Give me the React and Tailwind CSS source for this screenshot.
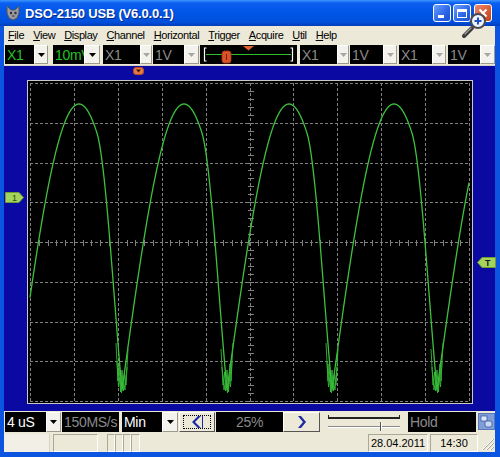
import React from "react";

const P = 105;
const A = 286;
function above(x) {
  const t = (((x - 17) % P) + P) % P;
  if (t < 62) return A * Math.sin((Math.PI / 2) * (t / 62));
  const u = t - 62;
  const c = A * Math.cos((Math.PI / 2) * (u / 62));
  if (u <= 18) return c;
  const s = (u - 18) / 25;
  return Math.max(0, c * (1 - s * s));
}

function tracePoints() {
  const pts = [];
  for (let x = 30; x <= 469.01; x += 0.25) {
    const y = 309 - above(x);
    pts.push(`${(x - 28).toFixed(2)},${y.toFixed(2)}`);
  }
  return pts.join(" ");
}

const TRACE = tracePoints();
const TROUGHS = [122, 227, 332, 437].map((c) => c - 28);

function troughNoise(cx, k) {
  const a = [
    [-6, 262], [-4, 300], [-3, 283], [-1.5, 311], [0, 289], [1.5, 310], [2.5, 291], [4, 304], [6, 268],
  ];
  const b = [
    [-5, 280], [-3.5, 306], [-2, 296], [-0.5, 312], [1, 298], [3, 309], [5, 286],
  ];
  const s = k % 2 === 0 ? 1 : -1;
  return [a, b].map((arr) => arr.map(([dx, y]) => `${cx + dx * s},${y}`).join(" "));
}

const VX = Array.from({ length: 11 }, (_, i) => Math.round(2 + i * 43.9) + 0.5);
const HY = Array.from({ length: 9 }, (_, j) => Math.round(2 + j * 39.75) + 0.5);
const TX = Array.from({ length: 51 }, (_, k) => Math.round(2 + k * 8.78) + 0.5);
const TY = Array.from({ length: 41 }, (_, k) => Math.round(2 + k * 7.95) + 0.5);

function Screen() {
  const g = "#808080";
  return (
    <svg width="444" height="322" className="block">
      <g stroke={g} strokeWidth="1" strokeDasharray="3 2" shapeRendering="crispEdges">
        {VX.map((x, i) => (
          <line key={"v" + i} x1={x} y1={2} x2={x} y2={320} />
        ))}
        {HY.map((y, i) => (
          <line key={"h" + i} x1={2} y1={y} x2={441} y2={y} />
        ))}
      </g>
      <g stroke={g} strokeWidth="1" shapeRendering="crispEdges">
        {TX.map((x, i) => (
          <line key={"tx" + i} x1={x} y1={158.5} x2={x} y2={164.5} />
        ))}
        {TY.map((y, i) => (
          <line key={"ty" + i} x1={219.5} y1={y} x2={225.5} y2={y} />
        ))}
      </g>
      <polyline points={TRACE} fill="none" stroke="#3ec23e" strokeWidth="1.3" strokeLinejoin="round" />
      {TROUGHS.map((cx, k) =>
        troughNoise(cx, k).map((p, j) => (
          <polyline key={k + "-" + j} points={p} fill="none" stroke="#36b836" strokeWidth="1" opacity="0.9" />
        ))
      )}
    </svg>
  );
}

function Arrow({ disabled }) {
  return (
    <svg width="7" height="4" viewBox="0 0 7 4">
      <polygon points="0,0 7,0 3.5,4" fill={disabled ? "#a7a6a0" : "#000"} />
    </svg>
  );
}

function DropBtn({ w, disabled }) {
  return (
    <div
      className={`${w} h-full bg-[#f3f2ec] border border-t-[#ffffff] border-l-[#ffffff] border-r-[#9d9a8c] border-b-[#9d9a8c] flex items-center justify-center`}
    >
      <Arrow disabled={disabled} />
    </div>
  );
}

function Combo({ ml, box, btn, text, color, disabled, h }) {
  return (
    <div className={`flex ${h} ${ml}`}>
      <div
        className={`${box} h-full bg-black flex items-center pl-[2px] overflow-hidden whitespace-nowrap text-[14px] tracking-[-0.3px] leading-none ${color}`}
      >
        {text}
      </div>
      {btn && <DropBtn w={btn} disabled={disabled} />}
    </div>
  );
}

function TitleBar() {
  return (
    <div className="h-[26px] flex items-center pl-[5px] bg-[linear-gradient(180deg,#3d95ff_0%,#0a5ef0_12%,#0055e5_50%,#0050dc_85%,#003cb8_100%)]">
      <svg width="16" height="16" viewBox="0 0 16 16">
        <polygon points="2,1 6,5 10,5 14,1 14,8 12,13 8,15 4,13 2,8" fill="#9a9aa0" stroke="#55555c" strokeWidth="1" />
        <circle cx="6" cy="8" r="1.2" fill="#2b2b2f" />
        <circle cx="10.5" cy="8" r="1.2" fill="#2b2b2f" />
        <path d="M7 11 L9.5 11" stroke="#2b2b2f" strokeWidth="1" />
      </svg>
      <span className="ml-[4px] text-white font-bold text-[13px] tracking-[-0.2px] leading-none [text-shadow:1px_1px_0_#0a2a8a]">
        DSO-2150 USB (V6.0.0.1)
      </span>
      <div className="ml-auto mr-[8px] flex gap-[2px]">
        <div className="w-[18px] h-[18px] rounded-[3px] border border-white bg-[linear-gradient(135deg,#6ea0fa,#2a64e6_60%,#1c50d0)] relative">
          <div className="absolute left-[4px] bottom-[3px] w-[6px] h-[3px] bg-white" />
        </div>
        <div className="w-[18px] h-[18px] rounded-[3px] border border-white bg-[linear-gradient(135deg,#6ea0fa,#2a64e6_60%,#1c50d0)] flex items-center justify-center">
          <div className="w-[10px] h-[9px] border border-white border-t-[3px]" />
        </div>
        <div className="ml-[1px] w-[18px] h-[18px] rounded-[3px] border border-white bg-[linear-gradient(135deg,#eb8a70,#d75a33_60%,#c0401c)] flex items-center justify-center">
          <svg width="10" height="10" viewBox="0 0 10 10">
            <path d="M1.5 1.5 L8.5 8.5 M8.5 1.5 L1.5 8.5" stroke="#fff" strokeWidth="2" />
          </svg>
        </div>
      </div>
    </div>
  );
}

function M({ u, rest }) {
  return (
    <span>
      <span className="underline underline-offset-[1px]">{u}</span>
      {rest}
    </span>
  );
}

function MenuBar() {
  return (
    <div className="h-[18px] bg-[#ece9d8] flex items-center pl-[4px] gap-[9px] text-[11px] tracking-[-0.4px] text-black leading-none">
      <M u="F" rest="ile" />
      <M u="V" rest="iew" />
      <M u="D" rest="isplay" />
      <M u="C" rest="hannel" />
      <M u="H" rest="orizontal" />
      <M u="T" rest="rigger" />
      <M u="A" rest="cquire" />
      <M u="U" rest="til" />
      <M u="H" rest="elp" />
    </div>
  );
}

function TriggerPos() {
  return (
    <div className="ml-[1px] w-[97px] h-[19px] bg-black">
      <svg width="97" height="19" className="block">
        <path d="M6.5 3 L4.5 3 L4.5 16 L6.5 16" stroke="#fff" strokeWidth="1.2" fill="none" />
        <path d="M90.5 3 L92.5 3 L92.5 16 L90.5 16" stroke="#fff" strokeWidth="1.2" fill="none" />
        <line x1="6" y1="9.5" x2="91" y2="9.5" stroke="#2fc02f" strokeWidth="1" />
        <rect x="22" y="6" width="9" height="12" rx="2.5" fill="#d9542a" stroke="#a83510" strokeWidth="0.8" />
        <line x1="26.5" y1="9" x2="26.5" y2="15" stroke="#7a2000" strokeWidth="1" />
        <polygon points="43,1 54,1 48.5,5.5" fill="#e0642f" />
      </svg>
    </div>
  );
}

function TopToolbar() {
  const G = "text-[#22c322]";
  const D = "text-[#8a8a8a]";
  return (
    <div className="h-[22px] bg-[#ece9d8] flex items-start pt-[1px] border-b border-[#d6d3c6]">
      <Combo h="h-[19px]" ml="ml-[1px]" box="w-[29px]" btn="w-[14px]" text="X1" color={G} />
      <Combo h="h-[19px]" ml="ml-[5px]" box="w-[31px]" btn="w-[16px]" text="10mV" color={G} />
      <Combo h="h-[19px]" ml="ml-[3px]" box="w-[37px]" btn="w-[12px]" text="X1" color={D} disabled />
      <Combo h="h-[19px]" ml="ml-[1px]" box="w-[31px]" btn="w-[15px]" text="1V" color={D} disabled />
      <TriggerPos />
      <Combo h="h-[19px]" ml="ml-[3px]" box="w-[37px]" btn="w-[12px]" text="X1" color={D} disabled />
      <Combo h="h-[19px]" ml="ml-[1px]" box="w-[33px]" btn="w-[14px]" text="1V" color={D} disabled />
      <Combo h="h-[19px]" ml="ml-[2px]" box="w-[33px]" btn="w-[14px]" text="X1" color={D} disabled />
      <Combo h="h-[19px]" ml="ml-[2px]" box="w-[32px]" btn="w-[15px]" text="1V" color={D} disabled />
    </div>
  );
}

function Scope() {
  return (
    <div className="relative h-[345px] bg-[#0a0aa2] pt-[14px] pl-[23px]">
      <div className="w-[446px] h-[324px] border border-[#c8c8c8] bg-black">
        <Screen />
      </div>
      <svg width="11" height="8" viewBox="0 0 11 8" className="absolute left-[129px] top-[1px]">
        <rect x="0.5" y="0.5" width="10" height="7" rx="2.5" fill="#e07a48" stroke="#b84a1c" />
        <polygon points="3,2.5 8,2.5 5.5,5.5" fill="#4a1500" />
      </svg>
      <svg width="19" height="11" viewBox="0 0 19 11" className="absolute left-[1px] top-[126px]">
        <polygon points="0.5,0.5 14,0.5 18.5,5.5 14,10.5 0.5,10.5" fill="#a4d45c" stroke="#6e9c34" />
        <text x="7" y="9" fontSize="9" fontFamily="Liberation Sans, sans-serif" fill="#2a4a10">1</text>
      </svg>
      <svg width="19" height="11" viewBox="0 0 19 11" className="absolute left-[473px] top-[191px]">
        <polygon points="18.5,0.5 5,0.5 0.5,5.5 5,10.5 18.5,10.5" fill="#a4d45c" stroke="#6e9c34" />
        <text x="8" y="9" fontSize="9" fontWeight="bold" fontFamily="Liberation Sans, sans-serif" fill="#1a1a1a">T</text>
      </svg>
    </div>
  );
}

function ArrowBtn({ dir, focus, w }) {
  const chevron =
    dir === "left" ? (
      <svg width="12" height="12" viewBox="0 0 12 12">
        <polygon points="7,0 10,0 4,6 10,12 7,12 1,6" fill="#1b2aa0" />
        <line x1="11.5" y1="0" x2="11.5" y2="12" stroke="#1b2aa0" strokeWidth="1" />
      </svg>
    ) : (
      <svg width="9" height="12" viewBox="0 0 9 12">
        <polygon points="1,0 4,0 9,6 4,12 1,12 6,6" fill="#1b2aa0" />
      </svg>
    );
  return (
    <div
      className={`${w} h-[20px] bg-[#ece9d8] border border-t-[#ffffff] border-l-[#ffffff] border-r-[#555555] border-b-[#555555] flex items-center justify-center`}
    >
      {focus ? (
        <div className="w-[28px] h-[14px] border border-dotted border-black flex items-center justify-center">{chevron}</div>
      ) : (
        chevron
      )}
    </div>
  );
}

function BottomToolbar() {
  const W = "text-white";
  const D = "text-[#8a8a8a]";
  return (
    <div className="h-[22px] bg-[#ece9d8] flex items-start pt-[1px]">
      <Combo h="h-[20px]" ml="ml-[1px]" box="w-[41px]" btn="w-[15px]" text="4 uS" color={W} />
      <Combo h="h-[20px]" ml="ml-[1px]" box="w-[57px]" text="150MS/s" color={D} />
      <Combo h="h-[20px]" ml="ml-[3px]" box="w-[40px]" btn="w-[16px]" text="Min" color={W} />
      <div className="ml-[1px]">
        <ArrowBtn dir="left" focus w="w-[36px]" />
      </div>
      <div className="ml-[1px] w-[67px] h-[20px] bg-black flex items-center justify-center text-[14px] tracking-[-0.3px] text-[#8a8a8a] leading-none">
        25%
      </div>
      <ArrowBtn dir="right" w="w-[37px]" />
      <div className="ml-[5px] w-[78px] h-[20px]">
        <svg width="78" height="20" className="block">
          <line x1="3" y1="6" x2="75" y2="6" stroke="#222" strokeWidth="2.2" />
          <line x1="3.5" y1="3" x2="3.5" y2="7" stroke="#222" strokeWidth="1" />
          <line x1="74.5" y1="3" x2="74.5" y2="7" stroke="#222" strokeWidth="1" />
          <line x1="3" y1="14.5" x2="75" y2="14.5" stroke="#8a8a8a" strokeWidth="1" />
          <line x1="3" y1="15.5" x2="75" y2="15.5" stroke="#ffffff" strokeWidth="1" />
          <line x1="55.5" y1="10" x2="55.5" y2="19" stroke="#555" strokeWidth="1" />
          <line x1="56.5" y1="10" x2="56.5" y2="19" stroke="#fff" strokeWidth="1" />
        </svg>
      </div>
      <div className="ml-[5px] w-[68px] h-[20px] bg-black flex items-center pl-[2px] text-[14px] tracking-[-0.3px] text-[#8a8a8a] leading-none">
        Hold
      </div>
      <div className="ml-[2px] w-[17px] h-[17px] mt-[1px] bg-[#7f9ed6] border border-[#5a78b8] flex items-center justify-center">
        <svg width="13" height="13" viewBox="0 0 13 13">
          <rect x="1" y="1" width="6" height="5" fill="#dfe8fa" stroke="#3a5aa0" strokeWidth="0.8" />
          <rect x="5" y="6" width="7" height="6" rx="2" fill="#c9d7f4" stroke="#3a5aa0" strokeWidth="0.8" />
        </svg>
      </div>
    </div>
  );
}

function Pane({ w, ml, children }) {
  return (
    <div
      className={`${w} ${ml} h-[18px] border border-t-[#aca899] border-l-[#aca899] border-b-[#ffffff] border-r-[#ffffff] flex items-center justify-center text-[11px] text-black leading-none`}
    >
      {children}
    </div>
  );
}

function StatusBar() {
  return (
    <div className="h-[19px] bg-[#ece9d8] flex items-start pt-[1px]">
      <div className="w-[46px] h-[18px] border-r border-[#d6d3c6] bg-[#f1efe6]" />
      <Pane w="w-[45px]" ml="ml-[3px]" />
      <Pane w="w-[8px]" ml="ml-[9px]" />
      <Pane w="w-[8px]" ml="ml-0" />
      <Pane w="w-[8px]" ml="ml-0" />
      <Pane w="w-[9px]" ml="ml-0" />
      <Pane w="w-[60px]" ml="ml-auto">28.04.2011</Pane>
      <Pane w="w-[48px]" ml="ml-[2px]">14:30</Pane>
      <div className="w-[17px] h-[18px] relative">
        <svg width="17" height="18" className="block">
          <g stroke="#ffffff" strokeWidth="1">
            <line x1="15" y1="5" x2="4" y2="16" />
            <line x1="15" y1="9" x2="8" y2="16" />
            <line x1="15" y1="13" x2="12" y2="16" />
          </g>
          <g stroke="#aca899" strokeWidth="1">
            <line x1="16" y1="5" x2="5" y2="16" />
            <line x1="16" y1="9" x2="9" y2="16" />
            <line x1="16" y1="13" x2="13" y2="16" />
          </g>
        </svg>
      </div>
    </div>
  );
}

export default function App() {
  return (
    <div className="relative w-[500px] h-[457px] overflow-hidden bg-[#0b55e0] font-['Liberation_Sans',Arial,sans-serif] select-none">
      <TitleBar />
      <div className="ml-[4px] mr-[5px] flex flex-col">
        <MenuBar />
        <TopToolbar />
        <Scope />
        <BottomToolbar />
        <StatusBar />
      </div>
      <svg width="40" height="36" viewBox="0 0 40 36" className="absolute left-[455px] top-[6px] pointer-events-none">
        <line x1="17" y1="22" x2="9" y2="30" stroke="#3c3c3c" strokeWidth="4" strokeLinecap="round" />
        <line x1="16" y1="22" x2="10" y2="28" stroke="#9a9a9a" strokeWidth="1.3" strokeLinecap="round" />
        <circle cx="23" cy="15" r="7" fill="#eef3fd" stroke="#4a4a52" strokeWidth="2" />
        <path d="M19.5 15 L26.5 15 M23 11.5 L23 18.5" stroke="#1e4ec0" strokeWidth="2" />
      </svg>
    </div>
  );
}
